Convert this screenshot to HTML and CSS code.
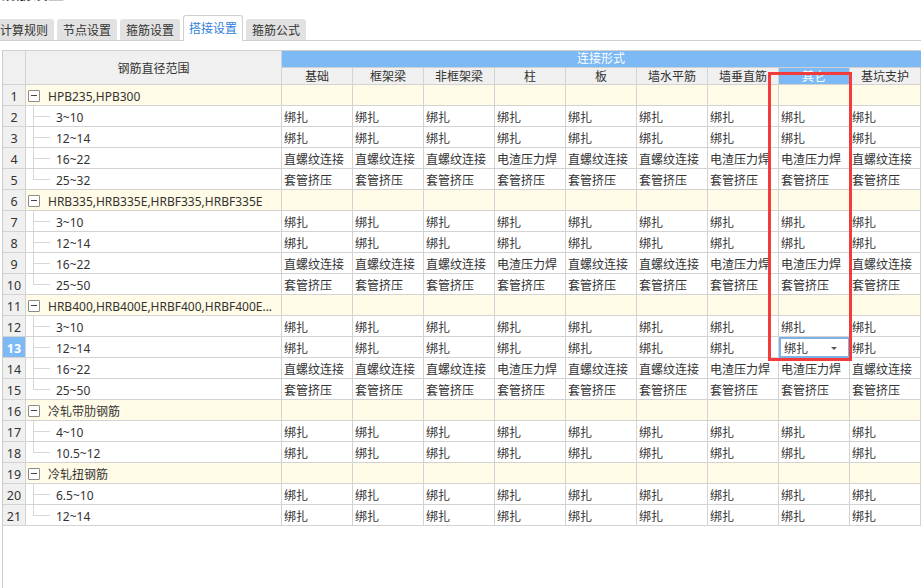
FILE: index.html
```html
<!DOCTYPE html>
<html lang="zh">
<head>
<meta charset="utf-8">
<title>搭接设置</title>
<link rel="stylesheet" href="styles.css">
</head>
<body>
<div class="title"><span class="title-text">钢筋设置</span></div>
<div class="tabbar">
  <div class="tab">计算规则</div>
  <div class="tab">节点设置</div>
  <div class="tab">箍筋设置</div>
  <div class="tab active">搭接设置</div>
  <div class="tab">箍筋公式</div>
</div>
<div class="grid">
  <table class="sheet">
    <colgroup>
      <col class="c-num"><col class="c-range">
      <col class="c-data"><col class="c-data"><col class="c-data"><col class="c-data"><col class="c-data"><col class="c-data"><col class="c-data"><col class="c-data"><col class="c-data">
    </colgroup>
    <thead>
      <tr class="h1">
        <th class="hnum" rowspan="2"></th>
        <th class="hrange" rowspan="2">钢筋直径范围</th>
        <th class="hblue" colspan="9">连接形式</th>
      </tr>
      <tr class="h2">
        <th>基础</th><th>框架梁</th><th>非框架梁</th><th>柱</th><th>板</th><th>墙水平筋</th><th>墙垂直筋</th><th class="hsel">其它</th><th>基坑支护</th>
      </tr>
    </thead>
    <tbody>
      <tr class="group"><td class="num">1</td><td class="grp"><span class="box"><span class="minus"></span></span>HPB235,HPB300</td><td></td><td></td><td></td><td></td><td></td><td></td><td></td><td></td><td></td></tr>
      <tr><td class="num">2</td><td class="leaf">3~10</td><td>绑扎</td><td>绑扎</td><td>绑扎</td><td>绑扎</td><td>绑扎</td><td>绑扎</td><td>绑扎</td><td>绑扎</td><td>绑扎</td></tr>
      <tr><td class="num">3</td><td class="leaf">12~14</td><td>绑扎</td><td>绑扎</td><td>绑扎</td><td>绑扎</td><td>绑扎</td><td>绑扎</td><td>绑扎</td><td>绑扎</td><td>绑扎</td></tr>
      <tr><td class="num">4</td><td class="leaf">16~22</td><td>直螺纹连接</td><td>直螺纹连接</td><td>直螺纹连接</td><td>电渣压力焊</td><td>直螺纹连接</td><td>直螺纹连接</td><td>电渣压力焊</td><td>电渣压力焊</td><td>直螺纹连接</td></tr>
      <tr><td class="num">5</td><td class="leaf last">25~32</td><td>套管挤压</td><td>套管挤压</td><td>套管挤压</td><td>套管挤压</td><td>套管挤压</td><td>套管挤压</td><td>套管挤压</td><td>套管挤压</td><td>套管挤压</td></tr>

      <tr class="group"><td class="num">6</td><td class="grp"><span class="box"><span class="minus"></span></span>HRB335,HRB335E,HRBF335,HRBF335E</td><td></td><td></td><td></td><td></td><td></td><td></td><td></td><td></td><td></td></tr>
      <tr><td class="num">7</td><td class="leaf">3~10</td><td>绑扎</td><td>绑扎</td><td>绑扎</td><td>绑扎</td><td>绑扎</td><td>绑扎</td><td>绑扎</td><td>绑扎</td><td>绑扎</td></tr>
      <tr><td class="num">8</td><td class="leaf">12~14</td><td>绑扎</td><td>绑扎</td><td>绑扎</td><td>绑扎</td><td>绑扎</td><td>绑扎</td><td>绑扎</td><td>绑扎</td><td>绑扎</td></tr>
      <tr><td class="num">9</td><td class="leaf">16~22</td><td>直螺纹连接</td><td>直螺纹连接</td><td>直螺纹连接</td><td>电渣压力焊</td><td>直螺纹连接</td><td>直螺纹连接</td><td>电渣压力焊</td><td>电渣压力焊</td><td>直螺纹连接</td></tr>
      <tr><td class="num">10</td><td class="leaf last">25~50</td><td>套管挤压</td><td>套管挤压</td><td>套管挤压</td><td>套管挤压</td><td>套管挤压</td><td>套管挤压</td><td>套管挤压</td><td>套管挤压</td><td>套管挤压</td></tr>

      <tr class="group"><td class="num">11</td><td class="grp"><span class="box"><span class="minus"></span></span>HRB400,HRB400E,HRBF400,HRBF400E...</td><td></td><td></td><td></td><td></td><td></td><td></td><td></td><td></td><td></td></tr>
      <tr><td class="num">12</td><td class="leaf">3~10</td><td>绑扎</td><td>绑扎</td><td>绑扎</td><td>绑扎</td><td>绑扎</td><td>绑扎</td><td>绑扎</td><td>绑扎</td><td>绑扎</td></tr>
      <tr><td class="num cur">13</td><td class="leaf">12~14</td><td>绑扎</td><td>绑扎</td><td>绑扎</td><td>绑扎</td><td>绑扎</td><td>绑扎</td><td>绑扎</td><td class="editing"><span class="edit-text">绑扎</span><span class="caret"></span></td><td>绑扎</td></tr>
      <tr><td class="num">14</td><td class="leaf">16~22</td><td>直螺纹连接</td><td>直螺纹连接</td><td>直螺纹连接</td><td>电渣压力焊</td><td>直螺纹连接</td><td>直螺纹连接</td><td>电渣压力焊</td><td>电渣压力焊</td><td>直螺纹连接</td></tr>
      <tr><td class="num">15</td><td class="leaf last">25~50</td><td>套管挤压</td><td>套管挤压</td><td>套管挤压</td><td>套管挤压</td><td>套管挤压</td><td>套管挤压</td><td>套管挤压</td><td>套管挤压</td><td>套管挤压</td></tr>

      <tr class="group"><td class="num">16</td><td class="grp"><span class="box"><span class="minus"></span></span>冷轧带肋钢筋</td><td></td><td></td><td></td><td></td><td></td><td></td><td></td><td></td><td></td></tr>
      <tr><td class="num">17</td><td class="leaf">4~10</td><td>绑扎</td><td>绑扎</td><td>绑扎</td><td>绑扎</td><td>绑扎</td><td>绑扎</td><td>绑扎</td><td>绑扎</td><td>绑扎</td></tr>
      <tr><td class="num">18</td><td class="leaf last">10.5~12</td><td>绑扎</td><td>绑扎</td><td>绑扎</td><td>绑扎</td><td>绑扎</td><td>绑扎</td><td>绑扎</td><td>绑扎</td><td>绑扎</td></tr>

      <tr class="group"><td class="num">19</td><td class="grp"><span class="box"><span class="minus"></span></span>冷轧扭钢筋</td><td></td><td></td><td></td><td></td><td></td><td></td><td></td><td></td><td></td></tr>
      <tr><td class="num">20</td><td class="leaf">6.5~10</td><td>绑扎</td><td>绑扎</td><td>绑扎</td><td>绑扎</td><td>绑扎</td><td>绑扎</td><td>绑扎</td><td>绑扎</td><td>绑扎</td></tr>
      <tr><td class="num">21</td><td class="leaf last">12~14</td><td>绑扎</td><td>绑扎</td><td>绑扎</td><td>绑扎</td><td>绑扎</td><td>绑扎</td><td>绑扎</td><td>绑扎</td><td>绑扎</td></tr>
    </tbody>
  </table>
  <div class="highlight"></div>
</div>
</body>
</html>
```
FILE: styles.css
```css
html, body {
  margin: 0;
  padding: 0;
  background: #ffffff;
  overflow: hidden;
}
body {
  width: 921px;
  height: 588px;
  font-family: "Noto Sans", "Noto Sans CJK SC", sans-serif;
  font-size: 12px;
  color: #333333;
}

.title {
  height: 2px;
  overflow: hidden;
}
.title-text {
  display: block;
  margin-top: -15px;
  font-size: 16px;
  line-height: 16px;
  font-weight: bold;
  color: #222;
}

.tabbar {
  display: flex;
  align-items: flex-end;
  height: 38px;
  border-bottom: 1px solid #cfcfcf;
  margin-left: -6px;
}
.tab {
  box-sizing: border-box;
  height: 21px;
  line-height: 21px;
  padding: 0 6px;
  margin-right: 3px;
  background: #e2e2e2;
  border-radius: 3px 3px 0 0;
  color: #333;
  white-space: nowrap;
  font-family: "Noto Sans CJK SC", sans-serif;
}
.tab.active {
  height: 26px;
  line-height: 24px;
  padding: 0 5px;
  margin-bottom: -1px;
  background: #ffffff;
  border: 1px solid #cfcfcf;
  border-bottom: none;
  color: #2f80dc;
}

.grid {
  position: relative;
  box-sizing: border-box;
  margin-top: 9px;
  margin-left: 2px;
  height: 538px;
  overflow: hidden;
  border-left: 1px solid #cccccc;
}

.sheet {
  border-collapse: separate;
  border-spacing: 0;
  table-layout: fixed;
  width: 918px;
  border-top: 1px solid #d0d0d0;
}
.c-num { width: 23px; }
.c-range { width: 256px; }
.c-data { width: 71px; }

.sheet th,
.sheet td {
  box-sizing: border-box;
  border-right: 1px solid #d3d3d3;
  border-bottom: 1px solid #d3d3d3;
  padding: 3px 2px 0;
  white-space: nowrap;
  overflow: hidden;
  font-weight: normal;
  line-height: 17px;
  height: 21px;
  max-height: 21px;
}

.sheet th {
  background: #f0f0f0;
  text-align: center;
  line-height: 15px;
  padding: 0 2px;
}
.h1 th { height: 17px; }
.h2 th { height: 16px; padding-top: 1px; }
.sheet th.hnum,
.sheet th.hrange {
  height: 33px;
  padding-top: 2px;
}
.sheet th.hblue {
  background: #7cb9f5;
  color: #ffffff;
  border-right-color: #7cb9f5;
  border-bottom-color: #d0d0d0;
  height: 17px;
  line-height: 16px;
}
.sheet th.hsel {
  background: #7cb9f5;
  color: #ffffff;
}

.sheet td.num {
  background: #f0f0f0;
  text-align: center;
  padding: 3px 0 0;
  font-size: 12.5px;
}
.sheet td.num.cur {
  background: #7cb9f5;
  color: #ffffff;
  font-weight: bold;
}

.group td {
  background: #fffbe6;
}
.sheet td.grp {
  padding-left: 2px;
}
.box {
  display: inline-block;
  position: relative;
  box-sizing: border-box;
  width: 12px;
  height: 12px;
  border: 1px solid #8c8c8c;
  border-radius: 1px;
  background: #ffffff;
  vertical-align: top;
  margin-top: 2px;
  margin-right: 8px;
}
.minus {
  position: absolute;
  left: 2px;
  top: 4px;
  width: 6px;
  height: 1px;
  background: #444;
}

.sheet td.leaf {
  position: relative;
  padding-left: 30px;
}
.sheet td.leaf::before {
  content: "";
  position: absolute;
  left: 7px;
  top: 0;
  bottom: -1px;
  width: 1px;
  background: #d6d6d6;
}
.sheet td.leaf.last::before {
  bottom: 50%;
}
.sheet td.leaf::after {
  content: "";
  position: absolute;
  left: 7px;
  top: 50%;
  width: 17px;
  height: 1px;
  background: #d6d6d6;
}

.sheet td.editing {
  outline: 2px solid #7fb3e6;
  outline-offset: -2px;
  padding: 3px 12px 0 5px;
}
.caret {
  float: right;
  width: 0;
  height: 0;
  margin-top: 7px;
  border-left: 3px solid transparent;
  border-right: 3px solid transparent;
  border-top: 3px solid #555;
}

.highlight {
  position: absolute;
  left: 765px;
  top: 22px;
  width: 84px;
  height: 289px;
  box-sizing: border-box;
  border: 3px solid #f23b3b;
  pointer-events: none;
}
```
